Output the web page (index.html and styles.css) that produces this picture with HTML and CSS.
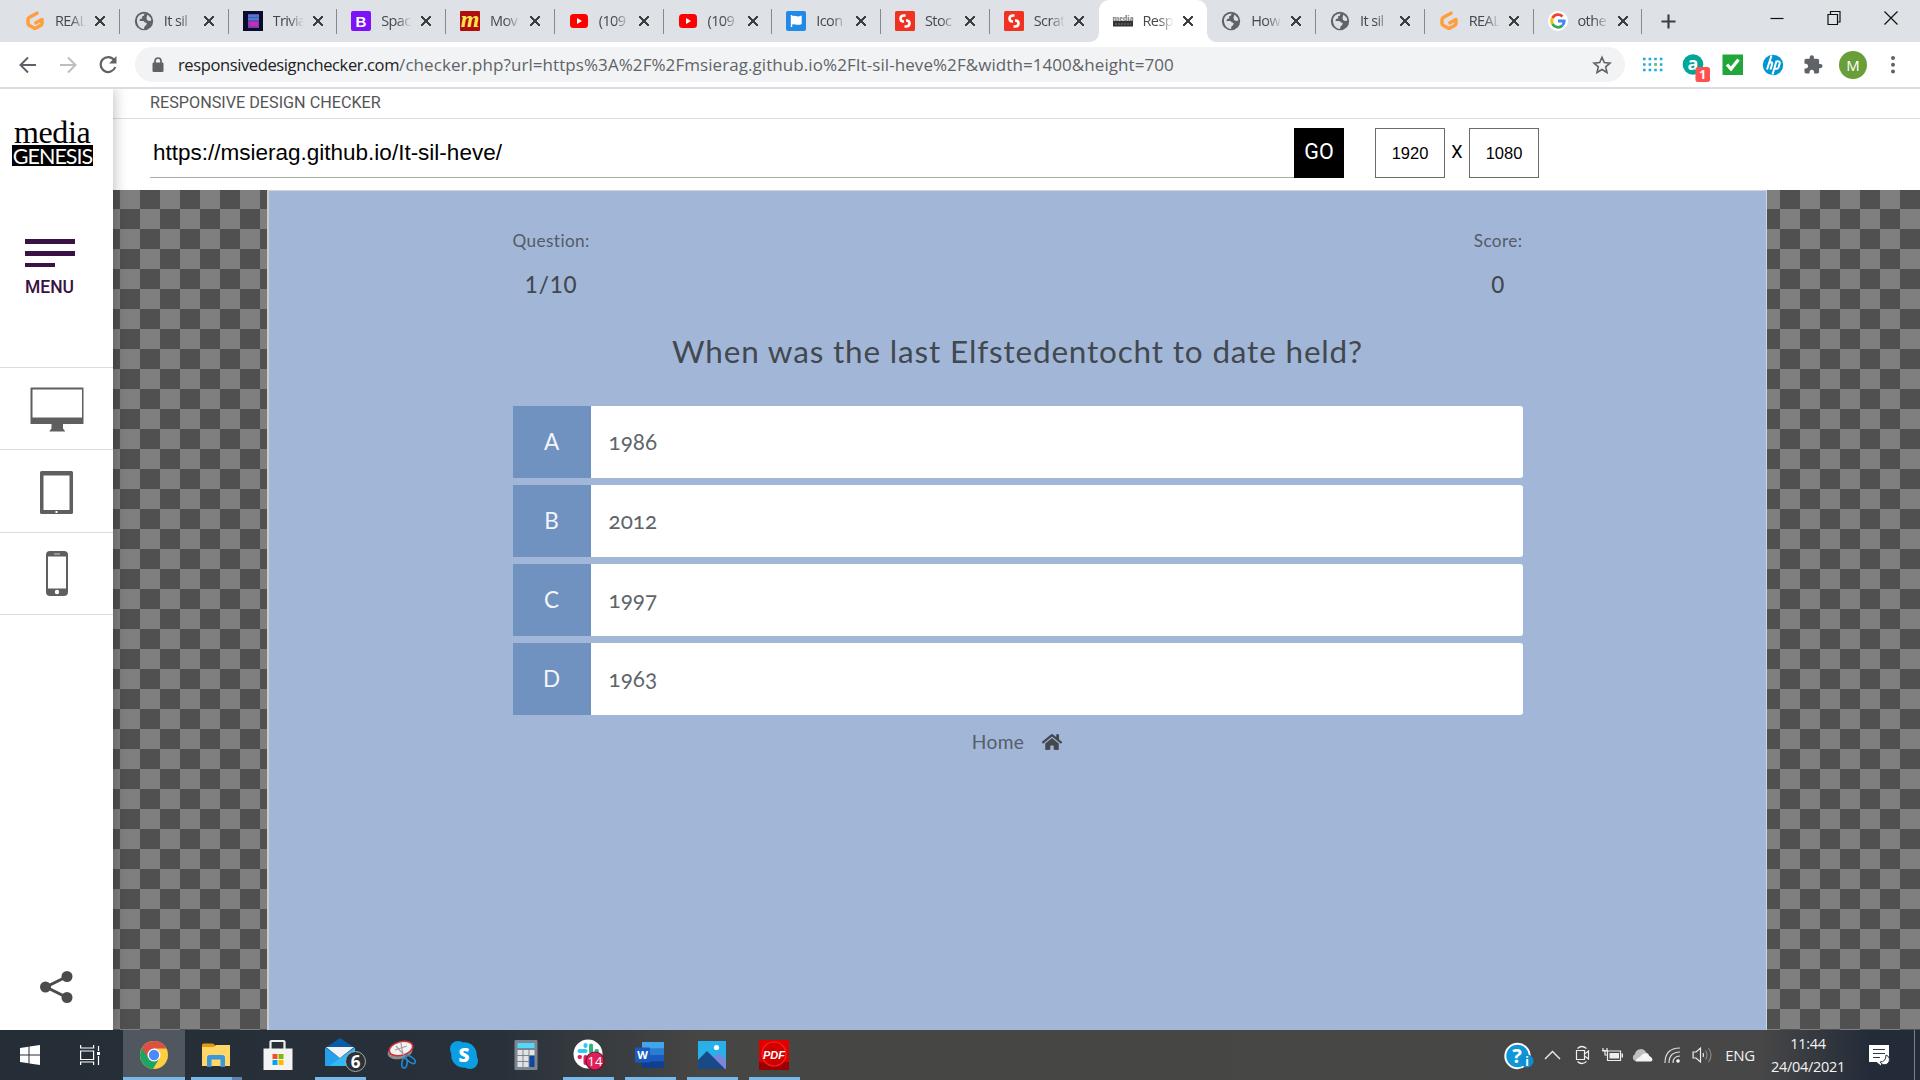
FILE: index.html
```html
<!DOCTYPE html>
<html lang="en">
<head>
<meta charset="utf-8">
<title>Responsive Design Checker</title>
<link rel="stylesheet" href="styles.css">
</head>
<body>
<svg class="defs" width="0" height="0" aria-hidden="true">
  <symbol id="globe" viewBox="0 0 20 20"><circle cx="10" cy="10" r="9.2" fill="#5f6368"/><path d="M3 8.5C4 4.500 7 2.800 10.500 2.600l-.5 2-2 .8.2 2-2.200.7-.5 2h4l1.500 1.500 1.800.4-.6 2-1.700 1.500-.5 2.600C6 18 2.500 13.500 3 8.500zM13.500 3.500l3.300 3.500.5 2.500-2.300.5-2-1-.5-2.500z" fill="#dee1e6"/></symbol>
  <symbol id="gitpod" viewBox="0 0 20 20"><path d="M12 2.200 4.500 6.300Q3 7.200 3 8.800v3.800q0 1 1 1.600l5 2.900q1 .5 2 0l5-2.900q1-.6 1-1.600V8.500l-6 3.300" fill="none" stroke="#ff9e3d" stroke-width="3.500" stroke-linecap="round" stroke-linejoin="round"/></symbol>
  <symbol id="youtube" viewBox="0 0 20 20"><rect x="1" y="3" width="18" height="14" rx="3.500" fill="#f00"/><path d="M8 7v6l5-3z" fill="#fff"/></symbol>
  <symbol id="stock" viewBox="0 0 20 20"><rect width="20" height="20" rx="1.500" fill="#f13223"/><path d="M10.500 4.500H9Q5.500 4.500 5.500 7.500t3 3H9M9.500 15.500H11q3.500 0 3.500-3t-3-3H11" fill="none" stroke="#fff" stroke-width="2.600"/></symbol>
</svg>

<header class="browser">
  <div class="tabstrip">
    <div class="tab"><svg class="fav"><use href="#gitpod"/></svg><span class="title">REAL</span><span class="x"></span></div>
    <div class="tab"><svg class="fav"><use href="#globe"/></svg><span class="title">It sil</span><span class="x"></span></div>
    <div class="tab"><svg class="fav" viewBox="0 0 20 20"><rect width="20" height="20" fill="#0b0b2c"/><rect x="5" y="3" width="11" height="14" fill="#7a3fb5"/><path d="M5 5h11M5 8h11" stroke="#20a0d8" stroke-width="1.500"/><path d="M6 12h9M7 14h8" stroke="#e02bb5" stroke-width="1.500"/></svg><span class="title">Trivia</span><span class="x"></span></div>
    <div class="tab"><svg class="fav" viewBox="0 0 20 20"><rect width="20" height="20" rx="2" fill="#7d12f8"/><text x="10" y="15.500" text-anchor="middle" class="fav-b">B</text></svg><span class="title">Spac</span><span class="x"></span></div>
    <div class="tab"><svg class="fav" viewBox="0 0 20 20"><rect width="20" height="20" rx="1" fill="#b00d0d"/><text x="10" y="16" text-anchor="middle" class="fav-m">m</text></svg><span class="title">Mov</span><span class="x"></span></div>
    <div class="tab"><svg class="fav"><use href="#youtube"/></svg><span class="title">(109</span><span class="x"></span></div>
    <div class="tab"><svg class="fav"><use href="#youtube"/></svg><span class="title">(109</span><span class="x"></span></div>
    <div class="tab"><svg class="fav" viewBox="0 0 20 20"><rect width="20" height="20" rx="2" fill="#228ae6"/><path d="M5.500 4v12M5.500 6c3-2 5 1.500 9.500-.5v7c-4.500 2-6.500-1.500-9.500.5z" fill="#fff" stroke="#fff" stroke-width="1.400"/></svg><span class="title">Icon</span><span class="x"></span></div>
    <div class="tab"><svg class="fav"><use href="#stock"/></svg><span class="title">Stoc</span><span class="x"></span></div>
    <div class="tab before-active"><svg class="fav"><use href="#stock"/></svg><span class="title">Scrat</span><span class="x"></span></div>
    <div class="tab active"><svg class="fav" viewBox="0 0 20 20"><text x="10" y="10" text-anchor="middle" class="fav-media">media</text><rect y="10" width="20" height="5.500" fill="#333"/><path d="M2 13h16" stroke="#777" stroke-dasharray="2 1"/></svg><span class="title">Resp</span><span class="x"></span></div>
    <div class="tab"><svg class="fav"><use href="#globe"/></svg><span class="title">How</span><span class="x"></span></div>
    <div class="tab"><svg class="fav"><use href="#globe"/></svg><span class="title">It sil</span><span class="x"></span></div>
    <div class="tab"><svg class="fav"><use href="#gitpod"/></svg><span class="title">REAL</span><span class="x"></span></div>
    <div class="tab"><svg class="fav" viewBox="0 0 20 20"><circle cx="10" cy="10" r="10" fill="#fff"/><g fill="none" stroke-width="2.800"><path d="M14.500 5.500A6.300 6.300 0 0 0 4.500 7" stroke="#ea4335"/><path d="M4.500 7a6.300 6.300 0 0 0 0 6" stroke="#fbbc05"/><path d="M4.500 13a6.300 6.300 0 0 0 9.800 1.600" stroke="#34a853"/><path d="M14.300 14.600Q16.200 12.800 16.200 10H10" stroke="#4285f4"/></g></svg><span class="title">othe</span><span class="x"></span></div>
    <svg class="newtab" viewBox="0 0 16 16"><path d="M8 .5v15M.5 8h15" stroke="#3c4043" stroke-width="2.300"/></svg>
    <div class="winctl">
      <svg viewBox="0 0 16 16"><path d="M1.500 8.500h13" stroke="#111" stroke-width="1.200"/></svg>
      <svg viewBox="0 0 16 16"><path d="M2 4.500h9.500v10H2zM4.500 4.500v-3H14V12h-2.500" fill="none" stroke="#111" stroke-width="1.200"/></svg>
      <svg viewBox="0 0 16 16"><path d="M1.500 1.500l13 13M14.500 1.500l-13 13" stroke="#111" stroke-width="1.200"/></svg>
    </div>
  </div>
  <div class="toolbar">
    <svg class="nav" viewBox="0 0 20 20"><path d="M18 10H3M10 2.500 2.500 10l7.500 7.500" fill="none" stroke="#5f6368" stroke-width="2"/></svg>
    <svg class="nav" viewBox="0 0 20 20"><path d="M2 10h15M10 2.500l7.500 7.500-7.500 7.500" fill="none" stroke="#bcbec2" stroke-width="2"/></svg>
    <svg class="nav" viewBox="0 0 20 20"><path d="M16.200 5A7.500 7.500 0 1 0 17.300 12" fill="none" stroke="#5f6368" stroke-width="2.200"/><path d="M18.500 1v7.500H11z" fill="#5f6368"/></svg>
    <div class="omnibox">
      <svg class="lock" viewBox="0 0 12 16"><rect x=".5" y="5.500" width="11" height="9.500" rx="1.200" fill="#5f6368"/><path d="M3 6V4a3 3 0 0 1 6 0v2" fill="none" stroke="#5f6368" stroke-width="1.700"/></svg>
      <span class="url"><span class="host">responsivedesignchecker.com</span><span class="path">/checker.php?url=https%3A%2F%2Fmsierag.github.io%2FIt-sil-heve%2F&amp;width=1400&amp;height=700</span></span>
      <svg class="star" viewBox="0 0 20 20"><path d="M10 2.300l2.300 5.300 5.700.5-4.300 3.800 1.300 5.600-5-3-5 3 1.300-5.600L2 8.100l5.700-.5z" fill="none" stroke="#5f6368" stroke-width="1.600"/></svg>
    </div>
    <div class="extensions">
      <svg viewBox="0 0 24 24"><g stroke-width="2.600" stroke-dasharray="2.600 3" fill="none"><path d="M2 6h20M2 11.500h20M2 17h20" stroke="#23a9e1"/></g><path d="M13.200 11.500h2.600" stroke="#8cc63f" stroke-width="2.600"/></svg>
      <svg class="ext-a" viewBox="0 0 24 24"><circle cx="12" cy="11.500" r="10.300" fill="#00a698"/><text x="12" y="17" text-anchor="middle" class="a-letter">a</text><rect x="14.500" y="14" width="14.500" height="15" rx="2.500" fill="#ff5050"/><text x="21.700" y="26" text-anchor="middle" class="a-count">1</text></svg>
      <svg viewBox="0 0 24 24"><rect x="1.500" y="1.500" width="20.500" height="20.500" fill="#21a63a"/><path d="M6 11.500l4 4.500 7.500-9.500" fill="none" stroke="#fff" stroke-width="3.200"/></svg>
      <svg viewBox="0 0 24 24"><circle cx="12" cy="12" r="10.200" fill="#0096d6"/><path d="M10.500 2.500 6 16.500M8 10Q12 8 11 11.500l-1.500 5M15.500 8 11.500 21.500M14.500 8.700Q19.500 7.500 18.700 10.500L17.500 14.500Q17 16 13.300 16" fill="none" stroke="#fff" stroke-width="2"/></svg>
      <svg viewBox="0 0 24 24"><path d="M20 11h-1.500V7c0-1.100-.9-2-2-2h-4V3.500a2.500 2.500 0 0 0-5 0V5h-4c-1.100 0-2 .9-2 2v3.800H3c1.500 0 2.700 1.200 2.700 2.700S4.500 16.200 3 16.200H1.500V20c0 1.100.9 2 2 2h3.800v-1.500c0-1.500 1.200-2.700 2.700-2.700s2.700 1.200 2.700 2.700V22h3.800c1.100 0 2-.9 2-2v-4H20a2.500 2.500 0 0 0 0-5z" transform="translate(2.200 1.500) scale(.86)" fill="#5f6368"/></svg>
      <span class="avatar">M</span>
      <svg viewBox="0 0 24 24"><g fill="#5f6368"><circle cx="12" cy="5" r="2"/><circle cx="12" cy="11.700" r="2"/><circle cx="12" cy="18.400" r="2"/></g></svg>
    </div>
  </div>
</header>

<main class="page">
  <aside class="sidebar">
    <div class="brand">
      <div class="logo"><span class="logo-top">media</span><span class="logo-bottom">GENESIS</span></div>
      <div class="menu"><i></i><i></i><i class="short"></i><b>MENU</b></div>
    </div>
    <div class="device"><svg width="54" height="46" viewBox="0 0 54 46"><path fill="#5f5f5f" fill-rule="evenodd" d="M1 .5h52q.5 0 .5.500v35.500q0 .5-.5.500H33v4.500l2 2.500v.5H19.500V44l2-2.500V37H1q-.5 0-.5-.5V1Q.5.5 1 .5zM2.500 2.500v28H52v-28z"/></svg></div>
    <div class="device tablet"><svg width="33" height="43" viewBox="0 0 33 43"><path fill="#5f5f5f" fill-rule="evenodd" d="M1.500 0h30Q33 0 33 1.500v40q0 1.500-1.500 1.500h-30Q0 43 0 41.500v-40Q0 0 1.500 0zM3.500 4.500v34.500h26V4.500z"/><rect x="15.500" y="40" width="2" height="2" fill="#fff"/></svg></div>
    <div class="device phone"><svg width="22" height="45" viewBox="0 0 22 45"><path fill="#5f5f5f" fill-rule="evenodd" d="M4 0h14q4 0 4 4v37q0 4-4 4H4q-4 0-4-4V4Q0 0 4 0zM2 5.500v32h18v-32z"/><path d="M8 3h6" stroke="#ccc"/><circle cx="11" cy="41" r="2.200" fill="#fff"/></svg></div>
    <svg class="share" width="33" height="32" viewBox="0 0 33 32"><path d="M27 5.500 6 16l21 10.500" fill="none" stroke="#4b4b4b" stroke-width="3"/><g fill="#4b4b4b"><circle cx="27" cy="5.500" r="5.500"/><circle cx="5.500" cy="16" r="5.500"/><circle cx="27" cy="26.500" r="5.500"/></g></svg>
  </aside>

  <section class="checker">
    <h1 class="app-title">RESPONSIVE DESIGN CHECKER</h1>
    <div class="controls">
      <div class="address">https://msierag.github.io/It-sil-heve/</div>
      <div class="go">GO</div>
      <div class="dim">1920</div><span class="times">X</span><div class="dim">1080</div>
    </div>
    <div class="stage">
      <div class="frame">
        <div class="quiz">
          <div class="hud">
            <div class="stat"><span>Question:</span><strong>1/10</strong></div>
            <div class="stat"><span>Score:</span><strong>0</strong></div>
          </div>
          <h2 class="question">When was the last Elfstedentocht to date held?</h2>
          <div class="choices">
            <div class="choice"><span class="key">A</span><span class="answer">1986</span></div>
            <div class="choice"><span class="key">B</span><span class="answer">2012</span></div>
            <div class="choice"><span class="key">C</span><span class="answer">1997</span></div>
            <div class="choice"><span class="key">D</span><span class="answer">1963</span></div>
          </div>
          <div class="home"><span>Home</span><svg width="22" height="18" viewBox="0 0 576 512"><path fill="#43484f" d="M280.400 148.300 96 300.100V464a16 16 0 0 0 16 16l112-.3a16 16 0 0 0 16-16V368a16 16 0 0 1 16-16h64a16 16 0 0 1 16 16v95.600a16 16 0 0 0 16 16.100L464 480a16 16 0 0 0 16-16V300L295.700 148.300a12.200 12.200 0 0 0-15.300 0zM571.600 251.500 488 182.600V44a12 12 0 0 0-12-12h-56a12 12 0 0 0-12 12v72.600L318.500 43a48 48 0 0 0-61 0L4.300 251.500a12 12 0 0 0-1.600 16.900l25.500 31a12 12 0 0 0 16.900 1.600l235.200-193.700a12.200 12.200 0 0 1 15.300 0L530.900 301a12 12 0 0 0 16.900-1.600l25.500-31a12 12 0 0 0-1.700-16.900z"/></svg></div>
        </div>
      </div>
    </div>
  </section>
</main>

<footer class="taskbar">
  <div class="task sys"><svg width="20" height="20" viewBox="0 0 20 20"><path fill="#fff" d="M0 3l8.500-1.200v7.700H0zM9.500 1.600 20 0v9.500H9.500zM0 10.500h8.500v7.700L0 17zM9.500 10.500H20V20L9.500 18.400z"/></svg></div>
  <div class="task sys wide"><svg width="21" height="20" viewBox="0 0 21 20"><g fill="none" stroke="#fff" stroke-width="1.200"><path d="M.6 0v3h13V0M.6 20v-3h13v3M.6 6h13v8.500H.6zM18.500 1v5M18.500 11v9"/></g><rect x="17" y="7" width="3" height="3" fill="#fff"/></svg></div>
  <div class="task current"><svg width="28" height="28" viewBox="0 0 28 28"><circle cx="14" cy="14" r="14" fill="#ffcd40"/><path d="M14 14 1.900 7A14 14 0 0 0 13 28l6-10z" fill="#1da462"/><path d="M14 7.500h12.400A14 14 0 0 0 1.900 7l6.300 10z" fill="#dd5144"/><circle cx="14" cy="14" r="6.500" fill="#fff"/><circle cx="14" cy="14" r="5.200" fill="#4c8bf5"/></svg></div>
  <div class="task open stacked"><svg width="28" height="24" viewBox="0 0 28 24"><path d="M0 2q0-1.500 1.500-1.500H11L14 3v4H0z" fill="#e29b0c"/><path d="M0 4h12l2-2h14v21H0z" fill="#ffd767"/><path d="M5 24V14.500q0-2.500 2.500-2.500h13q2.500 0 2.500 2.500V24h-4.500v-7.500h-9V24z" fill="#3b97dd"/></svg></div>
  <div class="task"><svg width="30" height="30" viewBox="0 0 30 30"><path d="M7.500 10V1.800Q7.500 1 8.500 1h12q1 0 1 .8V10" fill="none" stroke="#eee" stroke-width="2.200"/><path d="M.5 8.500h29V30h-29z" fill="#f3f3f3"/><path d="M9.500 14h5v5h-5z" fill="#f25022"/><path d="M15.500 14h5v5h-5z" fill="#7fba00"/><path d="M9.500 20h5v5h-5z" fill="#00a4ef"/><path d="M15.500 20h5v5h-5z" fill="#ffb900"/></svg></div>
  <div class="task open"><svg class="mail" width="44" height="36" viewBox="0 0 44 36"><path d="M0 11 15 1l15 10v6H0z" fill="#0a5ca8"/><path d="M0 10.500 17 22l13 7H0z" fill="#27a0ea"/><path d="M30 10.500V29H4z" fill="#2fb9f5"/><path d="M1 10h28L15 21z" fill="#f4f4f4"/><circle cx="30.500" cy="24.500" r="10" fill="#2a3139" stroke="#aaa"/><text x="30.500" y="30.500" text-anchor="middle" class="mail-count">6</text></svg></div>
  <div class="task"><svg width="30" height="30" viewBox="0 0 30 30"><ellipse cx="13" cy="12" rx="12.500" ry="7" transform="rotate(-12 13 12)" fill="#8d8d90"/><ellipse cx="14" cy="8.500" rx="12" ry="6.800" transform="rotate(-15 14 8.500)" fill="#f3f1f1" stroke="#cf3034" stroke-width="1.600"/><path d="M9 6l8 9M14 3l2 12M8 10l12-4" stroke="#a8a3a5" stroke-width="1.300"/><ellipse cx="17.500" cy="23" rx="2.600" ry="5" transform="rotate(8 17.500 23)" fill="none" stroke="#2386c8" stroke-width="1.700"/><ellipse cx="23.500" cy="19.500" rx="5.500" ry="2.600" transform="rotate(35 23.500 19.500)" fill="none" stroke="#2386c8" stroke-width="1.700"/></svg></div>
  <div class="task"><svg width="28" height="28" viewBox="0 0 28 28"><g fill="#0a9fe5"><circle cx="14" cy="14" r="12.800"/><circle cx="8" cy="8" r="8"/><circle cx="20" cy="20" r="8"/></g><text x="14" y="20.500" text-anchor="middle" class="skype-s">S</text></svg></div>
  <div class="task"><svg width="24" height="30" viewBox="0 0 24 30"><rect x=".5" width="23" height="30" rx="1" fill="#7d868f"/><path d="M3.500 3h17v5h-17z" fill="#50d9fc"/><path d="M3.500 10h5v5h-5zM9.500 10h5v5h-5zM15.500 10h5v5h-5zM3.500 16h5v5h-5zM9.500 16h5v5h-5zM3.500 22h5v5h-5zM9.500 22h5v5h-5z" fill="#e1e4e7"/><path d="M15.500 16h5v11h-5z" fill="#10479c"/></svg></div>
  <div class="task open"><svg width="31" height="31" viewBox="0 0 31 31"><circle cx="15" cy="15" r="14.500" fill="#fff"/><g stroke-width="4" stroke-linecap="round"><path d="M6.500 12h6M12.500 6v1" stroke="#36c5f0"/><path d="M18 6.500v6M23.500 12h.5" stroke="#2eb67d"/><path d="M12.500 18v6M6.500 18h.5" stroke="#e01e5a"/></g><circle cx="22" cy="22" r="9" fill="#e01e5a" stroke="#701230" stroke-width="1.200"/><text x="22" y="26.500" text-anchor="middle" class="slack-count">14</text></svg></div>
  <div class="task open"><svg width="30" height="28" viewBox="0 0 30 28"><path d="M7 1h22v6.800H7z" fill="#41a5ee"/><path d="M7 7.500h22v7H7z" fill="#2b7cd3"/><path d="M7 14h22v6.800H7z" fill="#185abd"/><path d="M7 20.500h22V27H7z" fill="#103f91"/><rect y="6.500" width="15" height="15" rx="1" fill="#185abd"/><text x="7.500" y="18" text-anchor="middle" class="word-w">W</text></svg></div>
  <div class="task open"><svg width="28" height="28" viewBox="0 0 28 28"><path d="M0 0h28v28H0z" fill="#28b0ea"/><path d="M14 18 21 12l7 7v9H14z" fill="#7b85d9"/><path d="M0 19 9 10l18 18H0z" fill="#174a86"/><circle cx="18.500" cy="6.500" r="2.600" fill="#fff"/></svg></div>
  <div class="task open"><svg width="30" height="30" viewBox="0 0 30 30"><path d="M0 0h30v30H0z" fill="#e10000"/><path d="M0 22h30v8H0z" fill="#9b0000"/><circle cx="15" cy="14" r="12" fill="#d00000" stroke="#ff2020" stroke-width="1.200"/><text x="15" y="19" text-anchor="middle" class="pdf-t">PDF</text></svg></div>
  <div class="tray">
    <svg class="help" width="30" height="28" viewBox="0 0 30 28"><circle cx="13.500" cy="14" r="12.200" fill="#0e96d8" stroke="#fff" stroke-width="2"/><text x="13" y="20.500" text-anchor="middle" class="help-q">?</text><circle cx="23" cy="19" r="6.500" fill="#0e8ed0"/><text x="23" y="23.500" text-anchor="middle" class="help-i">i</text></svg>
    <svg class="t30" width="16" height="10" viewBox="0 0 16 10"><path d="M.5 9 8 1.500 15.500 9" fill="none" stroke="#eee" stroke-width="1.400"/></svg>
    <svg class="t30" width="16" height="20" viewBox="0 0 16 20"><path d="M2 5.500h8v9H2zM10 9l4-3v8l-4-3M3 3.500q4-4 9 0M3 16.500q4 4 9 0" fill="none" stroke="#eee" stroke-width="1.200"/></svg>
    <svg class="t30" width="21" height="14" viewBox="0 0 21 14"><path d="M5.500 3h13v9.500h-13z" fill="none" stroke="#eee" stroke-width="1.200"/><path d="M7.500 5h9.500v5.500H7.500zM19.500 5.500h1.500v4h-1.500z" fill="#eee"/><path d="M1 0v3h4V0M3 3v4h2M0 2.500h6" stroke="#eee" stroke-width="1.200" fill="none"/></svg>
    <svg class="t30" width="21" height="14" viewBox="0 0 21 14"><path d="M4 13.500a4 4 0 0 1-1-7.500A6 6 0 0 1 14 4l2 3z" fill="#bfbfbf"/><path d="M4 13.500Q4 10 8 9q3-5 8-3.500 1 3 3 3.500 3 3 0 4.500z" fill="#f4f4f4"/></svg>
    <svg class="t30" width="17" height="17" viewBox="0 0 17 17"><g fill="none" stroke="#ddd" stroke-width="1.200"><path d="M1 16Q1 1 16 1M5 16Q5 5 16 5M9 16Q9 9 16 9"/></g><circle cx="14" cy="14" r="1.800" fill="#fff"/></svg>
    <svg class="t30" width="20" height="18" viewBox="0 0 20 18"><path d="M.6 6h3L8 2v14l-4.500-4H.6z" fill="none" stroke="#eee" stroke-width="1.200"/><path d="M10.500 7q1 2 0 4" fill="none" stroke="#eee" stroke-width="1.200"/><path d="M13 4.500q3 4.500 0 9M16 2q5 7 0 14" fill="none" stroke="#888" stroke-width="1.200"/></svg>
    <span class="lang">ENG</span>
    <div class="clock"><span>11:44</span><span>24/04/2021</span></div>
    <svg class="notice" width="22" height="21" viewBox="0 0 22 21"><path d="M0 0h20v17h-8v3.500L7.500 17H0z" fill="#fff"/><path d="M4 4.500h12M4 8.500h12M4 12.500h7" stroke="#303843" stroke-width="1.200"/><path d="M17 10a5 5 0 1 1-6 7q6 0 6-7z" fill="#fff" stroke="#303843" stroke-width="1"/></svg>
    <i class="peek"></i>
  </div>
</footer>
</body>
</html>
```
FILE: styles.css
```css
* { box-sizing: border-box; }
body { margin: 0; width: 1920px; height: 1080px; overflow: hidden; display: flex; flex-direction: column; background: #fff; font-family: "Open Sans", "Noto Sans", sans-serif; }
svg { display: block; flex: none; overflow: visible; }
.defs { position: absolute; }

/* Browser chrome */
.browser { height: 89px; border-bottom: 2px solid #dadce3; background: #fff; flex: none; }
.tabstrip { height: 42px; background: #dee1e6; display: flex; padding-left: 11px; }
.tab { width: 108.750px; height: 42px; flex: none; display: flex; align-items: center; padding-left: 14px; background: linear-gradient(#85888d, #85888d) right 9px / 1px 25px no-repeat; }
.tab.before-active { background: none; }
.tab.active { background: #fff; border-radius: 10px 10px 0 0; position: relative; }
.tab.active::before, .tab.active::after { content: ""; position: absolute; bottom: 0; width: 9px; height: 9px; }
.tab.active::before { left: -9px; background: radial-gradient(circle at 0 0, transparent 8.500px, #fff 9px); }
.tab.active::after { right: -9px; background: radial-gradient(circle at 100% 0, transparent 8.500px, #fff 9px); }
.fav { width: 20px; height: 20px; }
.title { width: 31px; margin-left: 10px; overflow: hidden; white-space: nowrap; font-size: 14.500px; letter-spacing: -.6px; line-height: 22px; color: #45494d; -webkit-mask-image: linear-gradient(90deg, #000 50%, transparent 100%); mask-image: linear-gradient(90deg, #000 50%, transparent 100%); }
.x { width: 10px; height: 10px; margin-left: 9px; background: linear-gradient(45deg, transparent 43%, #3c4043 44% 56%, transparent 57%), linear-gradient(-45deg, transparent 43%, #3c4043 44% 56%, transparent 57%); }
.newtab { width: 15px; height: 15px; margin: 14px 0 0 19px; }
.winctl { margin-left: auto; display: flex; gap: 41px; padding: 10px 21px 0 0; }
.winctl svg { width: 16px; height: 16px; }
.toolbar { height: 45px; display: flex; align-items: center; padding-left: 18px; }
.nav { width: 20px; height: 20px; margin-right: 20px; }
.nav:nth-child(3) { margin-right: 17px; }
.omnibox { width: 1490px; height: 35px; border-radius: 18px; background: #f1f3f4; display: flex; align-items: center; padding: 0 13px 0 17px; }
.lock { width: 12px; height: 16px; margin-right: 14px; }
.url { font-size: 16.500px; white-space: nowrap; color: #5f6368; }
.host { color: #202124; letter-spacing: -.38px; }
.path { font-size: 17px; letter-spacing: .07px; }
.star { width: 20px; height: 20px; margin-left: auto; }
.extensions { display: flex; align-items: center; gap: 16px; padding-left: 16px; }
.extensions svg { width: 24px; height: 24px; }
.avatar { width: 28px; height: 28px; margin: 0 -2px; border-radius: 50%; background: #689f38; color: #fff; font-size: 15px; line-height: 28px; text-align: center; }
.fav-b { font: 700 15px "Liberation Sans", sans-serif; fill: #fff; }
.fav-m { font: italic 700 24px "Liberation Serif", serif; fill: #ffe650; }
.fav-media { font: 700 8px "Liberation Serif", serif; fill: #777; }
.a-letter { font: 700 18px "Open Sans", sans-serif; fill: #fff; }
.a-count { font: 700 12px "Open Sans", sans-serif; fill: #fff; }

/* Page */
.page { height: 941px; flex: none; display: flex; }
.sidebar { width: 113px; flex: none; background: #fff; display: flex; flex-direction: column; position: relative; z-index: 1; box-shadow: 0 0 14px rgba(0,0,0,.3); clip-path: inset(0 -20px 0 0); }
.brand { height: 278px; padding: 27px 20px 0 12px; }
.logo { width: 81px; display: flex; flex-direction: column; font-family: "Liberation Serif", serif; }
.logo-top { height: 29px; line-height: 33px; font-size: 32px; letter-spacing: -.4px; padding-left: 2px; }
.logo-bottom { height: 21px; background: #000; color: #fff; font: 21.500px/22px Lato, sans-serif; letter-spacing: -1px; text-align: center; white-space: nowrap; }
.menu { padding: 73px 0 0 13px; display: flex; flex-direction: column; color: #3a1144; }
.menu i { width: 50px; height: 5px; margin-bottom: 7px; background: #3a1144; }
.menu i.short { width: 30px; height: 4px; }
.menu b { font: 500 17.500px/22px Roboto, sans-serif; margin-top: 2px; }
.device { height: 82.300px; border-top: 1px solid #dcdcdc; display: flex; align-items: center; justify-content: center; padding-top: 3px; }
.device.phone { border-bottom: 1px solid #dcdcdc; height: 83px; padding-top: 1px; }
.share { margin: auto 0 27px 40px; }
.checker { flex: 1; display: flex; flex-direction: column; }
.app-title { height: 30px; margin: 0; padding-left: 37px; border-bottom: 1px solid #dedede; font: 400 16.200px/28px Roboto, sans-serif; color: #555; }
.controls { height: 71px; display: flex; align-items: flex-start; padding: 9px 0 0 37px; font-family: "Liberation Sans", sans-serif; }
.address { width: 1144px; height: 50px; padding-left: 3px; border-bottom: 1px solid #aaa; font-size: 22.500px; line-height: 49px; color: #000; }
.go { width: 50px; height: 50px; background: #000; color: #fff; font: 21.500px/48px Roboto, sans-serif; text-align: center; margin-right: 31px; }
.dim { width: 70px; height: 50px; border: 1px solid #6b6b6b; font-size: 16.500px; line-height: 48px; text-align: center; }
.times { width: 24px; font: 18px/47px Roboto, sans-serif; text-align: center; }
.stage { flex: 1; padding: 0 153px 0 154px; background: repeating-conic-gradient(#505050 0 25%, #7f7f7f 0 50%) 27px 19px / 40px 40px; }
.frame { height: 840px; border: 1px solid #cdd4de; border-left: 2px solid #cdcdcd; border-bottom: 0; background: #a2b7d8; }
.quiz { width: 1010px; margin: 0 auto; padding-top: 37px; color: #43484f; font-family: Lato, "Open Sans", sans-serif; }
.hud { display: flex; justify-content: space-between; }
.stat { display: flex; flex-direction: column; align-items: center; font-size: 17.200px; line-height: 26px; letter-spacing: .4px; color: #535b66; }
.stat strong { font-size: 22.500px; font-weight: 500; line-height: 30px; margin-top: 16px; letter-spacing: .8px; color: #43484f; }
.question { margin: 26px -10px 0; font-size: 31.500px; line-height: 50px; font-weight: 400; text-align: center; letter-spacing: .82px; white-space: nowrap; }
.choices { margin-top: 29.500px; display: flex; flex-direction: column; gap: 6.500px; }
.choice { height: 72.500px; display: flex; background: #fff; border-radius: 0 3px 3px 0; align-items: stretch; }
.key { width: 78px; background: #6f92c0; color: #f2f5fa; font-size: 22.500px; line-height: 72px; text-align: center; }
.answer { padding-left: 18px; font-size: 22.500px; line-height: 71px; color: #60646a; font-feature-settings: "onum"; }
.home { display: flex; justify-content: center; align-items: center; gap: 17px; margin-top: 13px; font-size: 19.200px; line-height: 28px; color: #565e69; letter-spacing: .3px; }

/* Taskbar */
.taskbar { height: 50px; flex: none; display: flex; background: linear-gradient(90deg, #252e37 0, #28313a 500px, #464644 700px, #474747 1760px, #232b38 1870px); }
.task { width: 62px; display: flex; align-items: center; justify-content: center; border-bottom: 3px solid transparent; background-clip: padding-box; padding-top: 2px; flex: none; }
.sys { width: 60px; }
.sys.wide { width: 63px; padding-right: 2px; }
.current { background: #50575f; border-color: #76b9ed; }
.open { border-bottom: 0; padding-bottom: 3px; background: linear-gradient(#76b9ed, #76b9ed) 6px 100% / 51px 3px no-repeat; }
.stacked { background: linear-gradient(90deg, #76b9ed 41px, #5b85b0 41px) 6px 100% / 51px 3px no-repeat; }
.mail { margin-right: -14px; }
.mail-count { font: 700 17px "Open Sans", sans-serif; fill: #fff; }
.skype-s { font: 800 19px "Open Sans", sans-serif; fill: #fff; }
.slack-count { font: 13px "Open Sans", sans-serif; fill: #fff; }
.word-w { font: 700 11px "Open Sans", sans-serif; fill: #fff; }
.pdf-t { font: italic 700 11px "Liberation Sans", sans-serif; fill: #fff; }
.help-q { font: 700 20px "Open Sans", sans-serif; fill: #fff; }
.help-i { font: 700 12px "Open Sans", sans-serif; fill: #fff; }
.tray { margin-left: auto; display: flex; align-items: center; color: #f2f2f2; }
.help { margin: 2px 8px 0 0; }
.t30 { width: 21px; margin-right: 9px; }
.lang { width: 36px; margin-left: 0; font-size: 15px; letter-spacing: -.4px; text-align: center; }
.clock { width: 84px; margin-left: 8px; display: flex; flex-direction: column; align-items: center; font-size: 14.500px; line-height: 23px; letter-spacing: -.3px; }
.notice { margin-left: 19px; }
.peek { width: 1px; height: 50px; margin: 0 5px 0 23px; background: #7c828a; }
```
